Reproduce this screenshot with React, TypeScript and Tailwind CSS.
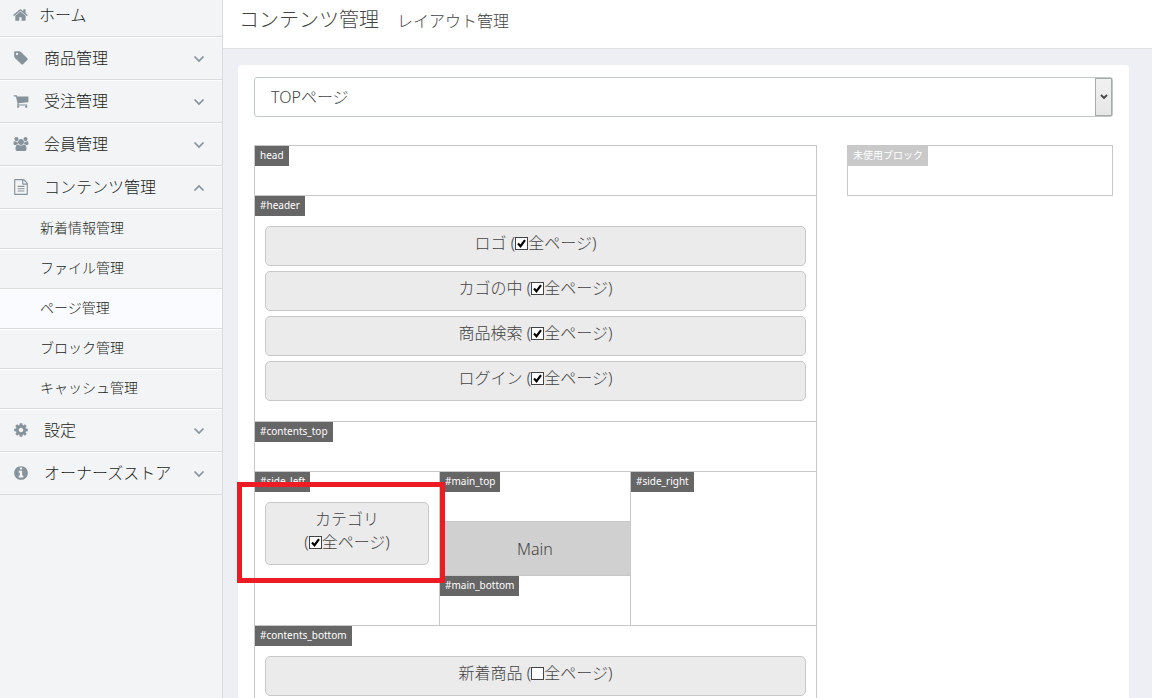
import React, { useState } from 'react';

interface MenuItem {
  label: string;
  icon: string;
  viewBox?: string;
  open?: boolean;
  children?: string[];
}

const ICON_HOME =
  'M1408 992v480q0 26-19 45t-45 19h-384v-384h-256v384h-384q-26 0-45-19t-19-45v-480q0-1 .5-3t.5-3l575-474 575 474q1 2 1 6zm223-69l-62 74q-8 9-21 11h-3q-13 0-21-7l-692-577-692 577q-12 8-24 7-13-2-21-11l-62-74q-8-10-7-23.5t11-21.5l719-599q32-26 76-26t76 26l244 204v-195q0-14 9-23t23-9h192q14 0 23 9t9 23v408l219 182q10 8 11 21.5t-7 23.5z';
const ICON_TAG =
  'M576 448q0-53-37.5-90.5t-90.5-37.5-90.5 37.5-37.5 90.5 37.5 90.5 90.5 37.5 90.5-37.5 37.5-90.5zm1067 576q0 53-37 90l-491 492q-39 37-91 37-53 0-90-37l-715-716q-38-37-64.5-101t-26.5-117v-416q0-52 38-90t90-38h416q53 0 117 26.5t102 64.5l715 714q37 39 37 91z';
const ICON_CART =
  'M704 1536q0 52-38 90t-90 38-90-38-38-90 38-90 90-38 90 38 38 90zm896 0q0 52-38 90t-90 38-90-38-38-90 38-90 90-38 90 38 38 90zm128-1088v512q0 24-16.5 42.5t-40.5 21.5l-1044 122q13 60 13 70 0 16-24 64h920q26 0 45 19t19 45-19 45-45 19h-1024q-26 0-45-19t-19-45q0-11 8-31.5t16-36 21.5-40 15.5-29.5l-177-823h-204q-26 0-45-19t-19-45 19-45 45-19h256q16 0 28.5 6.5t19.5 15.5 13 24.5 8 26 5.5 29.5 4.5 26h1201q26 0 45 19t19 45z';
const ICON_USERS =
  'M657 896q-162 5-265 128h-134q-82 0-138-40.5t-56-118.5q0-353 124-353 6 0 43.5 21t97.5 42.5 119 21.5q67 0 133-23-5 37-5 66 0 139 81 256zm1071 637q0 120-73 189.5t-194 69.5h-874q-121 0-194-69.5t-73-189.5q0-53 3.5-103.5t14-109 26.5-108.5 43-97.5 62-81 85.5-53.5 111.5-20q10 0 43 21.5t73 48 107 48 135 21.5 135-21.5 107-48 73-48 43-21.5q61 0 111.5 20t85.5 53.5 62 81 43 97.5 26.5 108.5 14 109 3.5 103.5zm-1024-1277q0 106-75 181t-181 75-181-75-75-181 75-181 181-75 181 75 75 181zm704 384q0 159-112.5 271.5t-271.5 112.5-271.5-112.5-112.5-271.5 112.5-271.5 271.5-112.5 271.5 112.5 112.5 271.5zm576 225q0 78-56 118.5t-138 40.5h-134q-103-123-265-128 81-117 81-256 0-29-5-66 66 23 133 23 59 0 119-21.5t97.5-42.5 43.5-21q124 0 124 353zm-128-609q0 106-75 181t-181 75-181-75-75-181 75-181 181-75 181 75 75 181z';
const ICON_FILE =
  'M1596 380q28 28 48 76t20 88v1152q0 40-28 68t-68 28h-1344q-40 0-68-28t-28-68v-1600q0-40 28-68t68-28h896q40 0 88 20t76 48zm-444-244v376h376q-10-29-22-41l-313-313q-12-12-41-22zm384 1528v-1024h-416q-40 0-68-28t-28-68v-416h-768v1536h1280zm-1024-864q0-14 9-23t23-9h704q14 0 23 9t9 23v64q0 14-9 23t-23 9h-704q-14 0-23-9t-9-23v-64zm736 224q14 0 23 9t9 23v64q0 14-9 23t-23 9h-704q-14 0-23-9t-9-23v-64q0-14 9-23t23-9h704zm0 256q14 0 23 9t9 23v64q0 14-9 23t-23 9h-704q-14 0-23-9t-9-23v-64q0-14 9-23t23-9h704z';
const ICON_COG =
  'M1152 896q0-106-75-181t-181-75-181 75-75 181 75 181 181 75 181-75 75-181zm512-109v222q0 12-8 23t-20 13l-185 28q-19 54-39 91 35 50 107 138 10 12 10 25t-9 23q-27 37-99 108t-94 71q-12 0-26-9l-138-108q-44 23-91 38-16 136-29 186-7 28-36 28h-222q-14 0-24.5-8.5t-11.5-21.5l-28-184q-49-16-90-37l-141 107q-10 9-25 9-14 0-25-11-126-114-165-168-7-10-7-23 0-12 8-23 15-21 51-66.5t54-70.5q-27-50-41-99l-183-27q-13-2-21-12.5t-8-23.5v-222q0-12 8-23t19-13l186-28q14-46 39-92-40-57-107-138-10-12-10-24 0-10 9-23 26-36 98.5-107.5t94.5-71.5q13 0 26 10l138 107q44-23 91-38 16-136 29-186 7-28 36-28h222q14 0 24.5 8.5t11.5 21.5l28 184q49 16 90 37l142-107q9-9 24-9 13 0 25 10 129 119 165 170 7 8 7 22 0 12-8 23-15 21-51 66.5t-54 70.5q26 50 41 98l183 28q13 2 21 12.5t8 23.5z';
const ICON_INFO =
  'M1152 1376v-160q0-14-9-23t-23-9h-96v-512q0-14-9-23t-23-9h-320q-14 0-23 9t-9 23v160q0 14 9 23t23 9h96v320h-96q-14 0-23 9t-9 23v160q0 14 9 23t23 9h448q14 0 23-9t9-23zm-128-896v-160q0-14-9-23t-23-9h-192q-14 0-23 9t-9 23v160q0 14 9 23t23 9h192q14 0 23-9t9-23zm640 416q0 209-103 385.5t-279.5 279.5-385.5 103-385.5-103-279.5-279.5-103-385.5 103-385.5 279.5-279.5 385.5-103 385.5 103 279.5 279.5 103 385.5z';

const menu: MenuItem[] = [
  { label: '商品管理', icon: ICON_TAG },
  { label: '受注管理', icon: ICON_CART },
  { label: '会員管理', icon: ICON_USERS, viewBox: '0 0 2048 1792' },
  {
    label: 'コンテンツ管理',
    icon: ICON_FILE,
    open: true,
    children: ['新着情報管理', 'ファイル管理', 'ページ管理', 'ブロック管理', 'キャッシュ管理'],
  },
  { label: '設定', icon: ICON_COG },
  { label: 'オーナーズストア', icon: ICON_INFO },
];

const ACTIVE_PAGE = 'ページ管理';

const MenuIcon: React.FC<{ path: string; viewBox?: string }> = ({ path, viewBox }) => (
  <svg viewBox={viewBox || '0 0 1792 1792'} className="h-4 w-4 shrink-0 fill-[#87939b]" aria-hidden="true">
    <path d={path} />
  </svg>
);

const Chevron: React.FC<{ up?: boolean }> = ({ up }) => (
  <svg viewBox="0 0 12 8" className="mt-[2px] h-2 w-3 fill-none stroke-[#87939b]" strokeWidth="1.7" aria-hidden="true">
    <path d={up ? 'M1.5 6.5 6 2 10.5 6.5' : 'M1.5 1.5 6 6 10.5 1.5'} />
  </svg>
);

const Sidebar: React.FC = () => (
  <nav className="w-[223px] shrink-0 border-r border-[#d9dcde] bg-[#f2f4f6] text-[#1c1f22]">
    <a href="#home" className="flex h-[37px] items-center border-b border-[#d9dcde] pb-[6px] pl-[13px]">
      <MenuIcon path={ICON_HOME} />
      <span className="ml-[10px]">ホーム</span>
    </a>
    <ul>
      {menu.map((item) => (
        <li key={item.label}>
          <button
            type="button"
            aria-expanded={!!item.open}
            className="flex h-[43px] w-full items-center border-t border-b border-t-white border-b-[#d9dcde] pr-[17px] pb-[2px] pl-[13px]"
          >
            <MenuIcon path={item.icon} viewBox={item.viewBox} />
            <span className="ml-[15px] flex-1 text-left">{item.label}</span>
            <Chevron up={item.open} />
          </button>
          {item.children && (
            <ul>
              {item.children.map((child) => (
                <li key={child}>
                  <a
                    href="#page"
                    className={
                      child === ACTIVE_PAGE
                        ? 'flex h-10 items-center border-t border-b border-t-white border-b-[#d9dcde] bg-[#fafbfe] pb-[2px] pl-10 text-sm'
                        : 'flex h-10 items-center border-t border-b border-t-white border-b-[#d9dcde] pb-[2px] pl-10 text-sm'
                    }
                  >
                    {child}
                  </a>
                </li>
              ))}
            </ul>
          )}
        </li>
      ))}
    </ul>
  </nav>
);

const AreaLabel: React.FC<{ children: string }> = ({ children }) => (
  <div className="h-5 w-fit bg-[#666] px-[5px] text-[10px] leading-[19px] font-normal text-white">{children}</div>
);

interface BlockProps {
  name: string;
  checked?: boolean;
  stacked?: boolean;
}

const Block: React.FC<BlockProps> = ({ name, checked = false, stacked }) => {
  const [allPages, setAllPages] = useState(checked);

  return (
    <div className="rounded-[5px] border border-[#c8c8c8] bg-[#ebebeb] pt-[5px] pb-[10px] text-center leading-[23px]">
      {name}
      {stacked ? <br /> : ' '}
      <label className="inline-flex items-center">
        (
        <span className="relative h-[13px] w-[13px]">
          <input
            type="checkbox"
            checked={allPages}
            onChange={(e) => setAllPages(e.target.checked)}
            className="peer block h-[13px] w-[13px] appearance-none border border-[#444] bg-white"
          />
          <svg
            viewBox="0 0 13 13"
            className="pointer-events-none absolute inset-0 hidden fill-none stroke-black peer-checked:block"
            strokeWidth="2.2"
            aria-hidden="true"
          >
            <path d="M3 6.5 5.5 9.2 10 3.2" />
          </svg>
        </span>
        全ページ)
      </label>
    </div>
  );
};

const LayoutEditor: React.FC = () => (
  <div className="border-x border-t border-[#c8c8c8]">
    <section className="h-[50px] border-b border-[#c8c8c8]">
      <AreaLabel>head</AreaLabel>
    </section>
    <section className="border-b border-[#c8c8c8]">
      <AreaLabel>#header</AreaLabel>
      <div className="flex flex-col gap-[5px] px-[10px] pt-[10px] pb-5">
        <Block name="ロゴ" checked />
        <Block name="カゴの中" checked />
        <Block name="商品検索" checked />
        <Block name="ログイン" checked />
      </div>
    </section>
    <section className="h-[50px] border-b border-[#c8c8c8]">
      <AreaLabel>#contents_top</AreaLabel>
    </section>
    <div className="grid h-[154px] grid-cols-[185fr_191fr_185fr] border-b border-[#c8c8c8]">
      <section className="relative border-r border-[#c8c8c8]">
        <AreaLabel>#side_left</AreaLabel>
        <div className="p-[10px]">
          <Block name="カテゴリ" checked stacked />
        </div>
        {/* highlight frame around the category block */}
        <div className="pointer-events-none absolute top-[10px] -right-[6px] -left-[18px] z-10 h-[101px] border-[5px] border-[#ed1c24]" />
      </section>
      <section className="flex flex-col border-r border-[#c8c8c8]">
        <div className="h-[49px]">
          <AreaLabel>#main_top</AreaLabel>
        </div>
        <div className="flex h-[55px] items-center justify-center border-y border-[#c8c8c8] bg-[#d0d0d0] text-[#444]">
          Main
        </div>
        <AreaLabel>#main_bottom</AreaLabel>
      </section>
      <section>
        <AreaLabel>#side_right</AreaLabel>
      </section>
    </div>
    <section className="border-b border-[#c8c8c8]">
      <AreaLabel>#contents_bottom</AreaLabel>
      <div className="px-[10px] pt-[10px] pb-5">
        <Block name="新着商品" />
      </div>
    </section>
  </div>
);

const App: React.FC = () => {
  return (
    <div className="flex h-screen overflow-hidden bg-[#eeeff4] font-['Noto_Sans','Noto_Sans_CJK_JP',sans-serif] text-base font-light text-[#444]">
      <Sidebar />
      <main className="min-w-0 flex-1">
        <header className="flex h-[49px] items-baseline border-b border-[#e0e3e2] bg-white pt-[6px] pl-4">
          <h1 className="text-xl">コンテンツ管理</h1>
          <span className="ml-[18px]">レイアウト管理</span>
        </header>
        <div className="mt-4 mr-[23px] ml-[15px] rounded-t bg-white px-4 pt-3 pb-10">
          <div className="relative">
            <select
              aria-label="ページ"
              className="block h-10 w-full appearance-none rounded-[3px] border border-[#c0c8c8] bg-white pr-6 pl-4"
            >
              <option>TOPページ</option>
            </select>
            <span className="pointer-events-none absolute inset-y-px right-px flex w-[17px] items-center justify-center border border-[#aaa] bg-linear-to-b from-[#f1f1f1] to-[#e6e6e6]">
              <svg viewBox="0 0 8 6" className="h-[6px] w-2 fill-none stroke-[#444]" strokeWidth="1.8" aria-hidden="true">
                <path d="M1 1 4 4 7 1" />
              </svg>
            </span>
          </div>
          <div className="mt-7 grid grid-cols-[563fr_266fr] items-start gap-[30px]">
            <LayoutEditor />
            <section className="h-[51px] border border-[#c8c8c8]">
              <div className="h-5 w-fit bg-[#c9c9c9] px-[5px] text-[10px] leading-[19px] font-normal text-white">
                未使用ブロック
              </div>
            </section>
          </div>
        </div>
      </main>
    </div>
  );
};

export default App;
